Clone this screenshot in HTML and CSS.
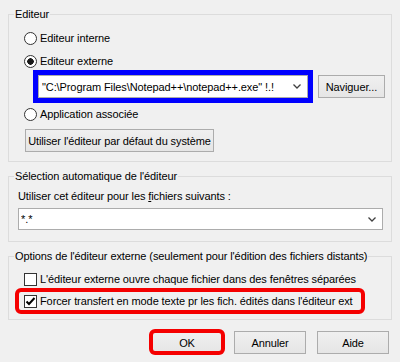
FILE: index.html
```html
<!DOCTYPE html>
<html lang="fr">
<head>
    <meta charset="UTF-8">
    <title>Options de l'éditeur</title>
    <link rel="stylesheet" href="styles.css">
</head>
<body>
    <div class="dialog">
        <fieldset class="group group-editor">
            <legend>Editeur</legend>
            <div class="choice first"><span class="radio"></span>Editeur interne</div>
            <div class="choice"><span class="radio checked"></span>Editeur externe</div>
            <div class="path-row">
                <div class="combo path-combo mark-blue">
                    <span class="combo-text">"C:\Program Files\Notepad++\notepad++.exe" !.!</span>
                    <svg class="chevron" width="8" height="5" viewBox="0 0 8 5"><polyline points="0.5,0.5 4,4 7.5,0.5" fill="none" stroke="#404040" stroke-width="1.3"/></svg>
                </div>
                <button class="btn btn-browse">Naviguer...</button>
            </div>
            <div class="choice"><span class="radio"></span>Application associée</div>
            <button class="btn btn-default">Utiliser l'éditeur par défaut du système</button>
        </fieldset>

        <fieldset class="group group-auto">
            <legend>Sélection automatique de l'éditeur</legend>
            <div class="field-label">Utiliser cet éditeur pour les <u>f</u>ichiers suivants :</div>
            <div class="combo mask-combo">
                <span class="combo-text">*.*</span>
                <svg class="chevron" width="8" height="5" viewBox="0 0 8 5"><polyline points="0.5,0.5 4,4 7.5,0.5" fill="none" stroke="#404040" stroke-width="1.3"/></svg>
            </div>
        </fieldset>

        <fieldset class="group group-options">
            <legend>Options de l'éditeur externe (seulement pour l'édition des fichiers distants)</legend>
            <div class="check-row first">
                <span class="check"></span>L'éditeur externe ouvre chaque fichier dans des fenêtres séparées
            </div>
            <div class="check-row mark-red">
                <span class="check checked">
                    <svg width="11" height="11" viewBox="0 0 11 11"><polyline points="1.5,5.5 4,8 9.5,2" fill="none" stroke="#000" stroke-width="2"/></svg>
                </span>Forcer transfert en mode texte pr les fich. édités dans l'éditeur ext
            </div>
        </fieldset>

        <div class="actions">
            <button class="btn btn-action mark-red">OK</button>
            <button class="btn btn-action">Annuler</button>
            <button class="btn btn-action">Aide</button>
        </div>
    </div>
</body>
</html>
```

FILE: styles.css
```css
body {
    margin: 0;
    background-color: #f0f0f0;
    font-family: "Liberation Sans", Arial, sans-serif;
    font-size: 11px;
    letter-spacing: -0.1px;
    color: #000;
}
.dialog {
    width: 400px;
    height: 362px;
    box-sizing: border-box;
    padding: 7px 8px 0 8px;
}
.group {
    margin: 0;
    padding: 0;
    min-width: 0;
    border: 1px solid #dcdcdc;
}
.group legend {
    margin-left: 5px;
    padding: 0 1px;
    line-height: 14px;
}
.group-auto, .group-options {
    margin-top: 7px;
}
.group-editor {
    padding-bottom: 9px;
}
.group-auto {
    padding-bottom: 11px;
}
.group-options {
    padding-bottom: 11px;
}

/* radio buttons */
.choice {
    display: flex;
    align-items: center;
    height: 14px;
    margin: 9px 0 0 15px;
    line-height: 14px;
}
.choice.first {
    margin-top: 10px;
}
.radio {
    width: 13px;
    height: 13px;
    box-sizing: border-box;
    border: 1px solid #333;
    border-radius: 50%;
    background: #fff;
    margin-right: 3px;
    flex: none;
}
.radio.checked {
    background: radial-gradient(circle, #1a1a1a 0 3px, #fff 3.5px);
}

/* combo boxes */
.path-row {
    display: flex;
    align-items: center;
    margin: 7px 0 8px 29px;
}
.combo {
    position: relative;
    display: flex;
    align-items: center;
    box-sizing: border-box;
    background: #fff;
    border: 1px solid #acacac;
}
.combo-text {
    flex: 1;
    white-space: nowrap;
    overflow: hidden;
}
.chevron {
    flex: none;
    margin: 0 6px 0 4px;
}
.path-combo {
    width: 270px;
    height: 23px;
    padding-left: 3px;
}
.mask-combo {
    height: 22px;
    margin: 5px 8px 0 9px;
    padding-left: 2px;
}
.field-label {
    margin: 6px 0 0 9px;
    line-height: 14px;
}

/* buttons */
.btn {
    font: inherit;
    letter-spacing: inherit;
    color: #000;
    height: 23px;
    padding: 0;
    border: 1px solid #acacac;
    border-radius: 0;
    background: linear-gradient(#f0f0f0, #e5e5e5);
}
.btn-browse {
    width: 67px;
    margin-left: 10px;
}
.btn-default {
    display: block;
    width: 189px;
    margin: 8px 0 0 16px;
}
.actions {
    display: flex;
    justify-content: flex-end;
    gap: 11px;
    margin: 11px 3px 0 0;
}
.btn-action {
    width: 72px;
}

/* check boxes */
.check-row {
    display: flex;
    width: max-content;
    align-items: center;
    height: 14px;
    line-height: 14px;
    margin: 9px 0 0 15px;
}
.check-row + .check-row {
    margin-top: 8px;
}
.check {
    width: 13px;
    height: 13px;
    box-sizing: border-box;
    border: 1px solid #333;
    background: #fff;
    margin-right: 3px;
    flex: none;
    display: flex;
    align-items: center;
    justify-content: center;
}

/* annotation frames drawn over the dialog */
.mark-blue, .mark-red {
    position: relative;
}
.mark-blue::after {
    content: "";
    position: absolute;
    top: -6px;
    bottom: -6px;
    left: -6px;
    right: -6px;
    border: 5px solid #0000ff;
}
.check-row.mark-red::after {
    content: "";
    position: absolute;
    top: -6px;
    bottom: -6px;
    left: -9px;
    right: -12px;
    border: 4px solid #f50000;
    border-radius: 6px;
}
.btn.mark-red::after {
    content: "";
    position: absolute;
    top: -3px;
    bottom: -2px;
    left: -3px;
    right: -3px;
    border: 4px solid #f50000;
    border-radius: 6px;
}
```
